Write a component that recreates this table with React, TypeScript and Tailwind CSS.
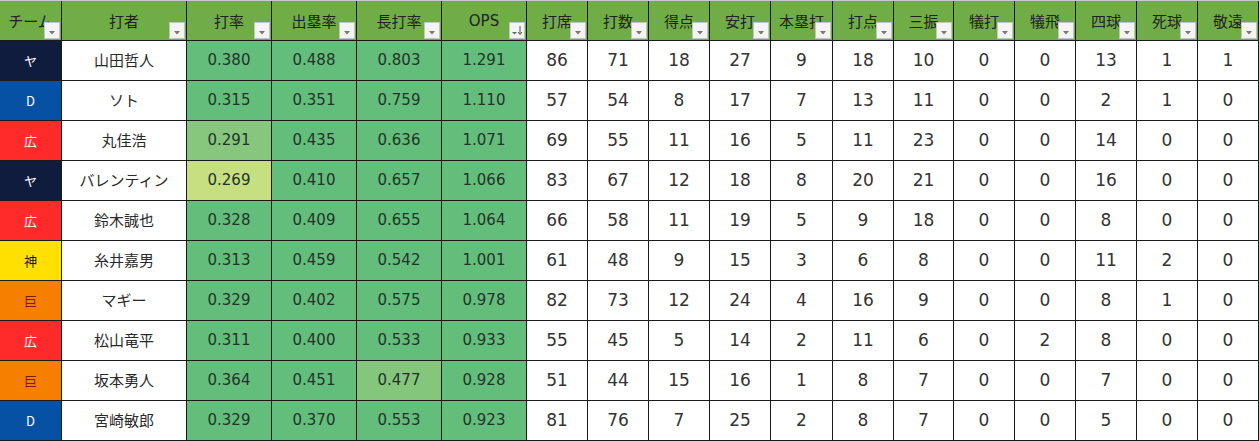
import React from 'react';

type Team = 'ヤ' | 'D' | '広' | '神' | '巨';

const teamStyle: Record<Team, string> = {
  ヤ: 'bg-[#101c3e] text-white',
  D: 'bg-[#0751a5] text-white',
  広: 'bg-[#ff2b2b] text-white',
  神: 'bg-[#ffe000] text-[#1a1a1a]',
  巨: 'bg-[#f77f00] text-[#7a1f00]',
};

const headers = [
  'チーム', '打者', '打率', '出塁率', '長打率', 'OPS', '打席', '打数', '得点', '安打',
  '本塁打', '打点', '三振', '犠打', '犠飛', '四球', '死球', '敬遠',
];

const rows: [Team, string, string[], number[]][] = [
  ['ヤ', '山田哲人', ['0.380', '0.488', '0.803', '1.291'], [86, 71, 18, 27, 9, 18, 10, 0, 0, 13, 1, 1]],
  ['D', 'ソト', ['0.315', '0.351', '0.759', '1.110'], [57, 54, 8, 17, 7, 13, 11, 0, 0, 2, 1, 0]],
  ['広', '丸佳浩', ['0.291', '0.435', '0.636', '1.071'], [69, 55, 11, 16, 5, 11, 23, 0, 0, 14, 0, 0]],
  ['ヤ', 'バレンティン', ['0.269', '0.410', '0.657', '1.066'], [83, 67, 12, 18, 8, 20, 21, 0, 0, 16, 0, 0]],
  ['広', '鈴木誠也', ['0.328', '0.409', '0.655', '1.064'], [66, 58, 11, 19, 5, 9, 18, 0, 0, 8, 0, 0]],
  ['神', '糸井嘉男', ['0.313', '0.459', '0.542', '1.001'], [61, 48, 9, 15, 3, 6, 8, 0, 0, 11, 2, 0]],
  ['巨', 'マギー', ['0.329', '0.402', '0.575', '0.978'], [82, 73, 12, 24, 4, 16, 9, 0, 0, 8, 1, 0]],
  ['広', '松山竜平', ['0.311', '0.400', '0.533', '0.933'], [55, 45, 5, 14, 2, 11, 6, 0, 2, 8, 0, 0]],
  ['巨', '坂本勇人', ['0.364', '0.451', '0.477', '0.928'], [51, 44, 15, 16, 1, 8, 7, 0, 0, 7, 0, 0]],
  ['D', '宮崎敏郎', ['0.329', '0.370', '0.553', '0.923'], [81, 76, 7, 25, 2, 8, 7, 0, 0, 5, 0, 0]],
];

// colour-scale cells that aren't the full green
const shade: Record<string, string> = {
  '0.291': 'bg-[#86c77d]',
  '0.269': 'bg-[#c6df81]',
  '0.477': 'bg-[#83c67c]',
};

const num = { fontFamily: '"DejaVu Sans", "Noto Sans CJK JP", sans-serif' };

const FilterButton: React.FC<{ sorted?: boolean }> = ({ sorted }) => (
  <span className="absolute right-px bottom-px w-4 h-[17px] bg-[#f4f4f4] border border-[#c4c4c4] flex items-center justify-center">
    {sorted ? (
      <svg width="12" height="11" viewBox="0 0 12 11">
        <path d="M1 7h5l-2.5 2.5z" fill="#666" />
        <path d="M9 1v8" stroke="#555" strokeWidth="1" />
        <path d="M7 7l2 2.5 2-2.5" stroke="#555" strokeWidth="1" fill="none" />
      </svg>
    ) : (
      <svg width="8" height="6" viewBox="0 0 8 6" className="mt-1">
        <path d="M1 1h6l-3 3.5z" fill="#777" />
      </svg>
    )}
  </span>
);

export default function App() {
  return (
    <div
      className="w-[1259px] h-[441px] bg-white overflow-hidden"
      style={{ fontFamily: '"Noto Sans CJK JP", "Noto Sans", sans-serif' }}
    >
      <div className="grid grid-cols-[61px_124px_84px_84px_84px_84px_60px_60px_60px_60px_61px_60px_59px_60px_60px_60px_60px_60px] grid-rows-[39px_repeat(10,39px)] gap-px bg-[#1a1a1a] pr-px pb-px border-t border-[#c8c8c8] text-[#2a2a2a]">
        {headers.map((h, i) => (
          <div
            key={h}
            className="relative bg-[#70ad47] flex items-center justify-center text-[15px] text-[#222] whitespace-nowrap overflow-hidden"
            style={i === 5 ? num : undefined}
          >
            <span className="mt-px">{h}</span>
            <FilterButton sorted={i === 5} />
          </div>
        ))}
        {rows.map(([team, name, rates, counts], r) => (
          <React.Fragment key={r}>
            <div className={`flex items-center justify-center text-[13px] ${teamStyle[team]}`}>{team}</div>
            <div className="bg-white flex items-center justify-center text-[15px]">{name}</div>
            {rates.map((v, j) => (
              <div
                key={j}
                className={`flex items-center justify-center text-[15px] text-[#24332a] ${shade[v] ?? 'bg-[#63be7b]'}`}
                style={num}
              >
                {v}
              </div>
            ))}
            {counts.map((v, j) => (
              <div key={j} className="bg-white flex items-center justify-center text-[17px] text-[#333]" style={num}>
                {v}
              </div>
            ))}
          </React.Fragment>
        ))}
      </div>
    </div>
  );
}
